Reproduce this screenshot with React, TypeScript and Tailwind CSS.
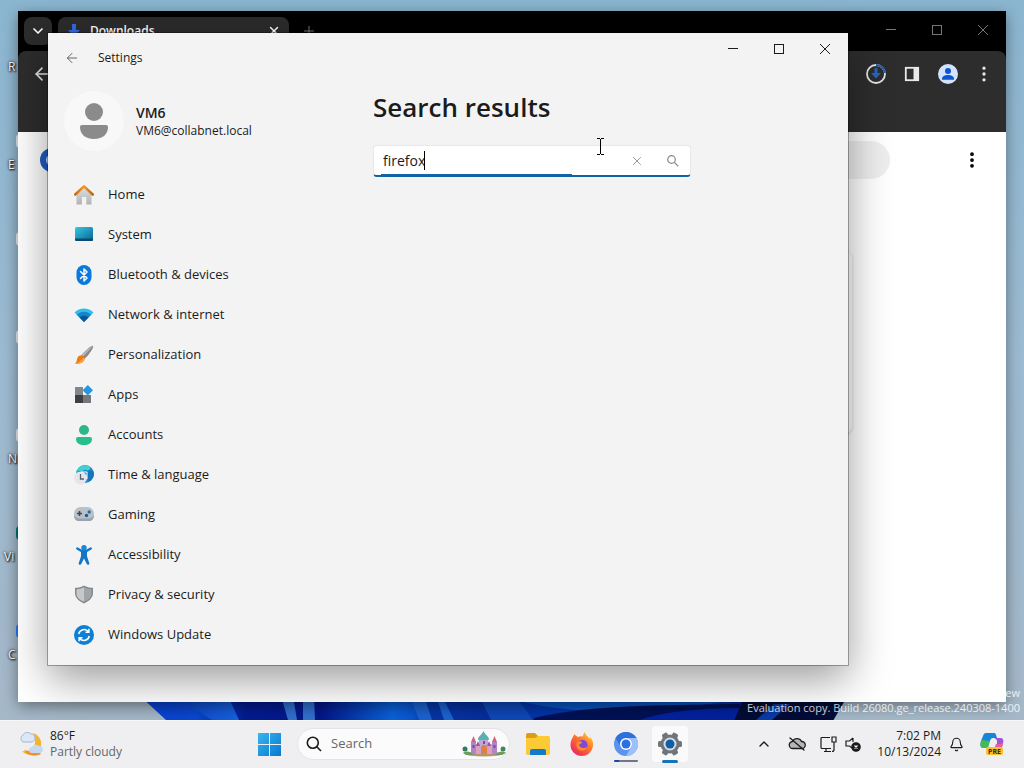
import type { ReactNode } from "react";
import { ArrowLeft, Bell, ChevronDown, ChevronUp, MoreVertical, Plus, Search, X } from "lucide-react";

const HomeIcon = () => (
  <svg viewBox="0 0 20 20" className="size-5">
    <defs>
      <linearGradient id="homeWall" x2="0" y2="1">
        <stop stopColor="#e0e0e0" />
        <stop offset="1" stopColor="#b0b2b5" />
      </linearGradient>
      <linearGradient id="homeRoof" x2="1">
        <stop stopColor="#c96a16" />
        <stop offset="0.5" stopColor="#f0982f" />
        <stop offset="1" stopColor="#c0670f" />
      </linearGradient>
    </defs>
    <path d="M2.500 9 10 2l7.500 7v10.500h-5.200V12H8v7.500H2.500z" fill="url(#homeWall)" />
    <path d="M1.300 9.500 10 1.400l8.700 8.100" fill="none" stroke="url(#homeRoof)" strokeWidth="2.600" strokeLinecap="round" strokeLinejoin="round" />
  </svg>
);

const SystemIcon = () => (
  <svg viewBox="0 0 20 20" className="size-5">
    <defs>
      <linearGradient id="sys" x2="1" y2="1">
        <stop stopColor="#35c8e4" />
        <stop offset="1" stopColor="#0b6290" />
      </linearGradient>
    </defs>
    <rect x="1" y="2" width="18" height="14" rx="1.5" fill="url(#sys)" />
    <path d="M1 13.500h18v1a1.500 1.500 0 0 1-1.500 1.500h-15A1.500 1.500 0 0 1 1 14.500z" fill="#0c4a73" />
  </svg>
);

const BluetoothIcon = () => (
  <svg viewBox="0 0 20 20" className="size-5">
    <rect x="2.500" y="0" width="15" height="20" rx="7.500" fill="#0a78dd" />
    <path d="M6.500 6.500 13 13l-3 3V4l3 3-6.500 6.500" fill="none" stroke="#fff" strokeWidth="1.500" strokeLinejoin="round" strokeLinecap="round" />
  </svg>
);

const NetworkIcon = () => (
  <svg viewBox="0 0 20 20" className="size-5">
    <path d="M10 17 .5 7.500C5.500 2.300 14.500 2.300 19.500 7.500z" fill="#32bdea" />
    <path d="M10 17 2.800 9.800c4-4.200 10.400-4.200 14.400 0z" fill="#1684c9" />
    <path d="m10 17-4.500-4.500c2.500-2.500 6.500-2.500 9 0z" fill="#0b5698" />
  </svg>
);

const BrushIcon = () => (
  <svg viewBox="0 0 20 20" className="size-5">
    <path d="M19 1c1.300 1.300-4.500 9.500-8.500 12.800l-3.300-3.300C10.500 6.500 17.700-.3 19 1z" fill="#85878c" />
    <path d="M19 1C17.500.3 10.500 7 7.200 10.500l1.600 1.600z" fill="#b5b7bb" />
    <path d="M7.500 10.200c2 .2 3 1.500 3.200 3.200-.4 4-4.200 5.600-9.900 5.200 2.400-1.500 1.800-3.700 2.800-6 .8-1.600 2.300-2.400 3.900-2.400z" fill="#ee7a17" />
    <path d="M1 18.600c2.700-.8 5.500-1.500 8.200-5.500l1.500.5c-.6 3.800-4.200 5.400-9.700 5z" fill="#f8a844" />
  </svg>
);

const AppsIcon = () => (
  <svg viewBox="0 0 20 20" className="size-5">
    <rect x="1" y="2" width="8" height="8" fill="#83868a" />
    <rect x="1" y="10" width="8" height="8" fill="#3c3f43" />
    <rect x="9" y="10" width="8" height="8" fill="#74777b" />
    <path d="m13.800 0 5.200 5.200-5.200 5.200-5.200-5.200z" fill="#2497e0" />
  </svg>
);

const AccountsIcon = () => (
  <svg viewBox="0 0 20 20" className="size-5">
    <circle cx="10" cy="5" r="5" fill="#2fb58a" />
    <path d="M4 12h12a2 2 0 0 1 2 2c0 4-3.500 6-8 6s-8-2-8-6a2 2 0 0 1 2-2z" fill="#27bd8c" />
  </svg>
);

const TimeIcon = () => (
  <svg viewBox="0 0 20 20" className="size-5">
    <circle cx="11" cy="9" r="9" fill="#1b88c8" />
    <path d="M3 5C6 0 12-1 16 2c1 3-2 4-4 3S9 7 6 6 3 8 2 9c0-2 .2-3 1-4z" fill="#45cfd1" />
    <path d="M15 6c2-1 4 0 4.800 2 .5 4-1.800 7-4.800 8.500-2-3-2-8 0-10.500z" fill="#1674bd" />
    <circle cx="6.500" cy="13" r="6.500" fill="#e5e5ea" />
    <path d="M6.500 9v5H10" stroke="#566070" strokeWidth="1.300" fill="none" />
    <path d="M7 7h6v7" stroke="#fff" strokeWidth="1" fill="none" />
  </svg>
);

const GamingIcon = () => (
  <svg viewBox="0 0 20 20" className="size-5">
    <rect x="0" y="2" width="20" height="14" rx="6.500" fill="#b9c1c9" />
    <path d="M0 10c0 4 2 6 5 6h10c3 0 5-2 5-6-1 2-3 3.500-5 3.500H5C3 13.500 1 12 0 10z" fill="#98a3ae" />
    <path d="M3 8.500h5M5.500 6v5" stroke="#3d454f" strokeWidth="1.500" />
    <circle cx="15.200" cy="7" r="1.700" fill="#2170b0" />
    <circle cx="12.500" cy="10.500" r="1.700" fill="#27588a" />
  </svg>
);

const AccessibilityIcon = () => (
  <svg viewBox="0 0 20 20" className="size-5">
    <circle cx="10" cy="2.700" r="2.700" fill="#1787d8" />
    <path d="m3.300 3.500 5 2.800h3.400l5-2.800" stroke="#1279c8" strokeWidth="2.500" fill="none" strokeLinecap="round" strokeLinejoin="round" />
    <path d="M7 6h6v5.300l2.300 6.900c.4 1.400-1.900 2.200-2.500.9L10 13.500l-2.800 5.600c-.6 1.300-2.900.5-2.500-.9L7 11.300z" fill="#1475c5" />
  </svg>
);

const ShieldIcon = () => (
  <svg viewBox="0 0 20 20" className="size-5">
    <path d="M10 .5c2.500 1.700 5.500 2.300 9 2.300V8c0 5-4 8-9 10.500C5 16 1 13 1 8V2.800c3.500 0 6.500-.6 9-2.300z" fill="#85888a" />
    <path d="M10 2.200c2.200 1.300 4.600 1.800 7.500 2V8.500c0 4-3 6.300-7.500 8.300z" fill="#a2a5a8" />
    <path d="M10 2.200C7.800 3.500 5.400 4 2.500 4.200v4.300c0 4 3 6.300 7.500 8.300z" fill="#c6c8c9" />
  </svg>
);

const UpdateIcon = () => (
  <svg viewBox="0 0 20 20" className="size-5">
    <circle cx="10" cy="10" r="10" fill="#0d80d5" />
    <path d="M4.700 9a5.500 5.500 0 0 1 9.800-2.200M15.300 11a5.500 5.500 0 0 1-9.800 2.200M14.900 3.800v3.400h-3.400M5.100 16.200v-3.400h3.400" fill="none" stroke="#fff" strokeWidth="1.500" />
  </svg>
);

const navItems = [
  { label: "Home", icon: <HomeIcon /> },
  { label: "System", icon: <SystemIcon /> },
  { label: "Bluetooth & devices", icon: <BluetoothIcon /> },
  { label: "Network & internet", icon: <NetworkIcon /> },
  { label: "Personalization", icon: <BrushIcon /> },
  { label: "Apps", icon: <AppsIcon /> },
  { label: "Accounts", icon: <AccountsIcon /> },
  { label: "Time & language", icon: <TimeIcon /> },
  { label: "Gaming", icon: <GamingIcon /> },
  { label: "Accessibility", icon: <AccessibilityIcon /> },
  { label: "Privacy & security", icon: <ShieldIcon /> },
  { label: "Windows Update", icon: <UpdateIcon /> },
];

const shortcuts = [
  { label: "R", color: "bg-transparent" },
  { label: "E", color: "bg-slate-100" },
  { label: "", color: "bg-slate-100" },
  { label: "", color: "bg-slate-100" },
  { label: "N", color: "bg-slate-100" },
  { label: "Vi", color: "bg-teal-700" },
  { label: "C", color: "bg-blue-500" },
];

function WindowControls() {
  return (
    <div className="flex">
      <button aria-label="Minimize" className="flex h-8 w-[46px] items-center justify-center">
        <svg viewBox="0 0 10 10" className="size-[10px]" stroke="currentColor"><path d="M0 4.500h10" /></svg>
      </button>
      <button aria-label="Maximize" className="flex h-8 w-[46px] items-center justify-center">
        <svg viewBox="0 0 10 10" className="size-[10px]" stroke="currentColor" fill="none"><rect x="0.5" y="0.5" width="9" height="9" /></svg>
      </button>
      <button aria-label="Close" className="flex h-8 w-[46px] items-center justify-center">
        <svg viewBox="0 0 10 10" className="size-[10px]" stroke="currentColor"><path d="m0 0 10 10M10 0 0 10" /></svg>
      </button>
    </div>
  );
}

function Wallpaper() {
  return (
    <svg viewBox="0 0 1024 24" preserveAspectRatio="none" className="absolute inset-x-0 bottom-0 h-6 w-full">
      <defs>
        <linearGradient id="bloom" x1="140" x2="840" gradientUnits="userSpaceOnUse">
          <stop stopColor="#0b3fd4" />
          <stop offset="0.08" stopColor="#0a49d0" />
          <stop offset="0.15" stopColor="#041c92" />
          <stop offset="0.26" stopColor="#04188a" />
          <stop offset="0.36" stopColor="#0b62da" />
          <stop offset="0.39" stopColor="#0a55cf" />
          <stop offset="0.41" stopColor="#0637a8" />
          <stop offset="0.5" stopColor="#082d9c" />
          <stop offset="1" stopColor="#0424a0" />
        </linearGradient>
        <linearGradient id="petal" x2="1">
          <stop stopColor="#0b44c4" />
          <stop offset="1" stopColor="#1863e0" />
        </linearGradient>
      </defs>
      <path d="M140 0h704l-14 24H166z" fill="url(#bloom)" />
      <path d="M178 2c14 8 24 16 34 22h27L228 0z" fill="url(#petal)" />
      <path d="M281 0h12l4 24h-9zM303 0h11l1 24h-12z" fill="#3270cf" />
      <path d="M410 0h14l8 24h-13zM436 0h6l12 24h-10z" fill="#1c63d0" />
      <path d="M479 0h38l16 24h-42z" fill="#0f48b8" />
      <path d="M515 0h210l20 24H534z" fill="#0435ac" />
      <path d="M515 4c60 16 140 14 220 0H515z" fill="#0b56c4" />
      <path d="M534 22c60-14 120-12 200-14h6v16H534z" fill="#021257" />
      <path d="M640 24c20-8 60-12 100-12v12z" fill="#0522a0" />
      <path d="M742 6h102l-14 24H732z" fill="#030d38" />
      <path d="m774 8 16 0-18 16h-16z" fill="#0b3ba8" />
    </svg>
  );
}

function BrowserWindow() {
  return (
    <section aria-label="Downloads" className="absolute bottom-[18px] left-[18px] right-[18px] top-[11px] flex flex-col bg-white shadow-[0_4px_14px_rgba(0,0,0,0.4)]">
      <div className="flex h-10 items-start bg-black text-white">
        <button aria-label="Search tabs" className="ml-[6px] mt-[6px] flex size-7 items-center justify-center rounded-lg bg-[#2c2c2c]">
          <ChevronDown className="size-4" strokeWidth={2.5} />
        </button>
        <div className="ml-[6px] mt-[6px] flex h-7 w-[231px] items-center rounded-lg bg-[#2c2c2c] pl-[10px] pr-2">
          <svg viewBox="0 0 12 14" className="h-[14px] w-3" fill="#3569e0"><path d="M4 0h4v6h4l-6 6-6-6h4z" /></svg>
          <span className="ml-[10px] flex-1 text-xs font-semibold">Downloads</span>
          <button aria-label="Close tab"><X className="size-[14px]" strokeWidth={2.5} /></button>
        </div>
        <button aria-label="New tab" className="ml-3 mt-3 text-[#777]"><Plus className="size-4" strokeWidth={1.5} /></button>
        <div className="ml-auto mt-[3px] text-[#777]"><WindowControls /></div>
      </div>
      <div className="bg-black">
        <div className="flex h-[81px] items-start justify-between rounded-t-lg bg-[#2d2d2d] px-[14px] pt-[13px] text-[#e8e8e8]">
          <button aria-label="Back"><ArrowLeft className="size-5" strokeWidth={2} /></button>
          <div className="flex gap-4">
            <button aria-label="Downloads in progress">
              <svg viewBox="0 0 20 20" className="size-5" fill="none">
                <circle cx="10" cy="10" r="9" stroke="#e3e3e3" strokeWidth="1.800" />
                <path d="M10 1a9 9 0 0 1 9 8" stroke="#235ba8" strokeWidth="1.800" />
                <path d="M8.500 4h3v5H15l-5 5.500L5 9h3.500z" fill="#2764bd" />
              </svg>
            </button>
            <button aria-label="Side panel">
              <svg viewBox="0 0 20 20" className="size-5">
                <rect x="3.800" y="3.800" width="12.400" height="12.400" fill="none" stroke="#e8e8e8" strokeWidth="1.800" />
                <path d="M11.500 3.500h5v13h-5z" fill="#e8e8e8" />
              </svg>
            </button>
            <button aria-label="Profile">
              <svg viewBox="0 0 20 20" className="size-5">
                <circle cx="10" cy="10" r="10" fill="#d3e3fd" />
                <circle cx="10" cy="7" r="3" fill="#0b57d0" />
                <path d="M4 15c0-3 3-4 6-4s6 1 6 4v.7H4z" fill="#0b57d0" />
              </svg>
            </button>
            <button aria-label="Browser menu" className="-mr-[2px] flex w-5 justify-center"><MoreVertical className="size-5" strokeWidth={2} /></button>
          </div>
        </div>
      </div>
      <div className="flex h-14 items-center justify-between pl-[22px] pr-6">
        <svg viewBox="0 0 24 24" className="size-6"><circle cx="12" cy="12" r="12" fill="#1f5cc4" /><circle cx="12" cy="12" r="5" fill="#3d86f2" stroke="#dbe8fb" strokeWidth="2" /></svg>
        <div className="ml-auto mr-[72px] h-[38px] w-[600px] rounded-full bg-[#eeeeee]" />
        <button aria-label="Page menu"><MoreVertical className="size-5 text-black" strokeWidth={2.500} /></button>
      </div>
      <div className="mx-auto mt-[62px] h-[184px] w-[680px] rounded-lg shadow-[0_1px_3px_rgba(0,0,0,0.2)]" />
    </section>
  );
}

function SettingsWindow() {
  return (
    <section aria-label="Settings" className="absolute bottom-[55px] left-12 right-[176px] top-[33px] flex flex-col bg-[#f3f3f3] text-[#1b1b1b] shadow-[0_0_0_1px_rgba(0,0,0,0.3),0_14px_40px_rgba(0,0,0,0.4)]">
      <header className="flex h-[50px] items-start justify-between">
        <div className="flex h-[50px] items-center pl-4">
          <button aria-label="Back" className="text-[#666]"><ArrowLeft className="size-4" strokeWidth={1.500} /></button>
          <span className="ml-[18px] text-xs">Settings</span>
        </div>
        <WindowControls />
      </header>
      <div className="flex min-h-0 flex-1">
        <aside className="w-[325px] shrink-0">
          <div className="flex items-center gap-3 pl-4 pt-2">
            <div className="flex size-[60px] items-center justify-center rounded-full bg-[#f8f8f8]">
              <svg viewBox="0 0 28 36" className="h-9 w-7" fill="#8b8b8b">
                <circle cx="14" cy="9" r="9" />
                <path d="M2 22h24a2 2 0 0 1 2 2c0 7-5 12-14 12S0 31 0 24a2 2 0 0 1 2-2z" />
              </svg>
            </div>
            <div className="pt-[2px]">
              <p className="text-sm font-semibold leading-[18px]">VM6</p>
              <p className="text-xs leading-[18px]">VM6@collabnet.local</p>
            </div>
          </div>
          <nav className="mt-6">
            {navItems.map((item) => (
              <a key={item.label} href="#" className="flex h-10 items-center gap-[14px] pl-[26px] text-[13px]">
                {item.icon}
                {item.label}
              </a>
            ))}
          </nav>
        </aside>
        <main className="flex-1 pt-1">
          <h1 className="text-[26px] font-semibold leading-10">Search results</h1>
          <div className="relative mt-[18px] flex h-8 w-[318px] items-center overflow-hidden rounded border border-[#e8e8e8] border-b-2 border-b-[#1064a6] bg-white">
            <input aria-label="Find a setting" defaultValue="firefox" className="min-w-0 flex-1 bg-transparent pl-[9px] text-sm outline-none" />
            <span className="absolute left-[50px] top-[5px] h-[19px] w-px bg-black" />
            <button aria-label="Clear" className="mr-[22px] text-[#888]"><X className="size-[14px]" strokeWidth={1.500} /></button>
            <button aria-label="Search" className="mr-[10px] text-[#888]">
              <svg viewBox="0 0 14 14" className="size-[14px]" fill="none" stroke="currentColor" strokeWidth="1.200">
                <circle cx="5.500" cy="5.500" r="3.800" />
                <path d="m8.300 8.300 4 4" />
              </svg>
            </button>
            <span className="absolute bottom-0 left-[7px] h-px w-[191px] bg-[#1064a6]" />
          </div>
        </main>
      </div>
    </section>
  );
}

function TaskButton({ label, children }: { label: string; children: ReactNode }) {
  return (
    <button aria-label={label} className="relative flex size-10 items-center justify-center">
      {children}
    </button>
  );
}

function Taskbar() {
  return (
    <footer className="flex h-12 shrink-0 items-center border-t border-[#f7f7f7] bg-[#efeff1] pb-px text-xs text-[#1b1b1b]">
      <button className="flex w-[249px] items-center gap-[6px] pl-[18px] text-left">
        <svg viewBox="0 0 26 26" className="size-[26px]">
          <path d="M15 2a11 11 0 1 1-11 18c8 2 13-3 13-9 0-4-1-7-2-9z" fill="#f4b52c" />
          <path d="M6 19c5 2 9 0 11-3l6 7c-6 3-14 2-17-4z" fill="#ef9327" />
          <path d="M5 11a4 4 0 0 1 0-7 5 5 0 0 1 8-1c3 0 4 2 4 4s-2 4-4 4z" fill="#dce8f7" stroke="#9eb8dc" />
          <path d="M14 22a3 3 0 0 1 0-6 4.500 4.500 0 0 1 7-1c3 0 4 2 4 4s-2 3-4 3z" fill="#c5daf2" />
        </svg>
        <span className="leading-4">
          <span className="block">86°F</span>
          <span className="block text-[#666]">Partly cloudy</span>
        </span>
      </button>

      <div className="flex items-center gap-1">
        <TaskButton label="Start">
          <svg viewBox="0 0 23 23" className="size-[23px]">
            <defs>
              <linearGradient id="start" x2="1" y2="1">
                <stop stopColor="#36b6ef" />
                <stop offset="1" stopColor="#0878cf" />
              </linearGradient>
            </defs>
            <path d="M0 0h11v11H0zM12 0h11v11H12zM0 12h11v11H0zM12 12h11v11H12z" fill="url(#start)" />
          </svg>
        </TaskButton>
        <label className="mx-1 flex h-8 w-[213px] items-center gap-[9px] rounded-full border border-[#e4e4e6] bg-[#fbfbfb] pl-2 pr-[2px]">
          <svg viewBox="0 0 16 16" className="size-4 shrink-0" fill="none" stroke="#1b1b1b" strokeWidth="1.600">
            <circle cx="6.800" cy="6.800" r="5.500" />
            <path d="m10.800 10.800 4.200 4.200" />
          </svg>
          <input aria-label="Search" placeholder="Search" className="min-w-0 flex-1 bg-transparent text-[13px] outline-none placeholder:text-[#666]" />
          <svg viewBox="0 0 46 26" className="h-[26px] w-[46px] shrink-0">
            <ellipse cx="23" cy="23" rx="18" ry="2.500" fill="#b6966c" />
            <path d="M10 11h5v12h-5zM31 11h5v12h-5z" fill="#b184c9" />
            <path d="M15 13h16v10H15z" fill="#dfa0bd" />
            <path d="M18 7h9v15h-9z" fill="#c0a8da" />
            <path d="m12.500 5 2.500 6h-5zM33.500 5l2.500 6h-5z" fill="#d95f78" />
            <path d="M17 9c0-4 3-4 5.500-9C25 5 28 5 28 9z" fill="#5bafb4" />
            <path d="m17 10 2 5h-4zM28 10l2 5h-4z" fill="#8d5aab" />
            <path d="M20 23v-6a3 3 0 0 1 6 0v6z" fill="#dd8042" />
            <path d="M11.500 14h2v3h-2zM32.500 14h2v3h-2zM22 10h2v3h-2z" fill="#72509b" />
            <circle cx="4" cy="18" r="2.500" fill="#33795d" />
            <circle cx="42" cy="18" r="2.500" fill="#3f8560" />
            <path d="M2 22c4-3 8-1 11 2H5zM45 22c-4-3-8-1-11 2h7z" fill="#6d9c60" />
          </svg>
        </label>
        <TaskButton label="File Explorer">
          <svg viewBox="0 0 26 24" className="h-6 w-[26px]">
            <path d="M1 3a2 2 0 0 1 2-2h7l3 3h11v18H1z" fill="#dc9c13" />
            <path d="M1 6h9l3-2h10a2 2 0 0 1 2 2v15a2 2 0 0 1-2 2H3a2 2 0 0 1-2-2z" fill="#fcca35" />
            <path d="M5 23v-4a2 2 0 0 1 2-2h12a2 2 0 0 1 2 2v4z" fill="#1479cb" />
          </svg>
        </TaskButton>
        <TaskButton label="Firefox">
          <svg viewBox="0 0 24 24" className="size-6">
            <defs>
              <linearGradient id="fox" x1="1" x2="0.200" y2="1">
                <stop stopColor="#ffe24b" />
                <stop offset="0.450" stopColor="#ff7b25" />
                <stop offset="1" stopColor="#ec1f65" />
              </linearGradient>
            </defs>
            <path d="M3 5c1-2 1-2 1-3 1 1 2 2 4 3 2-1 3-1 5-.5C13 2 14 1 15 0c0 3 3 4 5 7 0-1 0-2-.5-2.500C23 8 24 12 22.500 16 21 21 16.500 24 12 24 5.500 24 .5 19 .5 13 .5 10 1.500 7 3 5z" fill="url(#fox)" />
            <circle cx="12.500" cy="13" r="5" fill="#8145d7" />
            <path d="M7 10c2-1 3-1 5 0 0 2-3 2-3 3 1 3 4 4 8 2-1 4-6 5-9 2-2-2-2-5-1-7z" fill="#ff8b26" />
          </svg>
        </TaskButton>
        <TaskButton label="Chromium">
          <svg viewBox="0 0 24 24" className="size-6">
            <circle cx="12" cy="12" r="12" fill="#5b93ee" />
            <path d="M1.600 6A12 12 0 0 1 22.400 6H12a6 6 0 0 0-5.200 9z" fill="#2d6fdb" />
            <path d="M22.400 6A12 12 0 0 1 12 24l5.200-9A6 6 0 0 0 12 6z" fill="#9bc0fa" />
            <circle cx="12" cy="12" r="6" fill="#fff" />
            <circle cx="12" cy="12" r="4.500" fill="#2a70e0" />
          </svg>
          <span className="absolute bottom-[2px] h-[2px] w-6 rounded-full bg-gradient-to-r from-[#1a4aa0] from-20% to-[#6e7785] to-20%" />
        </TaskButton>
        <TaskButton label="Settings">
          <span className="flex size-9 items-center justify-center rounded bg-[#fafafa]">
            <svg viewBox="0 0 26 26" className="size-[26px]">
              <g fill="#70757b">
                <circle cx="13" cy="13" r="9.500" />
                <rect x="10" y="1" width="6" height="24" rx="1.500" transform="rotate(30 13 13)" />
                <rect x="10" y="1" width="6" height="24" rx="1.500" transform="rotate(90 13 13)" />
                <rect x="10" y="1" width="6" height="24" rx="1.500" transform="rotate(150 13 13)" />
              </g>
              <circle cx="13" cy="13" r="6.500" fill="#d8dde2" />
              <circle cx="13" cy="13" r="4.500" fill="#0f5fa8" />
            </svg>
          </span>
          <span className="absolute bottom-px h-[3px] w-4 rounded-full bg-[#1474b5]" />
        </TaskButton>
      </div>

      <div className="ml-auto flex items-center pr-5">
        <button aria-label="Hidden icons" className="mr-4"><ChevronUp className="size-4" strokeWidth={2} /></button>
        <button aria-label="OneDrive" className="mr-[14px]">
          <svg viewBox="0 0 18 14" className="h-[14px] w-[18px]" fill="#b5b5b5" stroke="#1b1b1b" strokeWidth="1.300" strokeLinecap="round">
            <path d="M5 11.500a3.500 3.500 0 0 1-.5-7 5 5 0 0 1 9 0 3.500 3.500 0 0 1 .5 7z" />
            <path d="m2 1 14 12" />
          </svg>
        </button>
        <button aria-label="Network" className="mr-2">
          <svg viewBox="0 0 17 17" className="size-[17px]" fill="none" stroke="#1b1b1b" strokeWidth="1.200">
            <path d="M10 1.500H2a1 1 0 0 0-1 1v9a1 1 0 0 0 1 1h9M4 15.500h7M6 12.500v3M12 1h4v5h-4zM14 6v7.500a2 2 0 0 1-2 2" />
          </svg>
        </button>
        <button aria-label="Volume muted" className="mr-4">
          <svg viewBox="0 0 16 16" className="size-4" fill="none" stroke="#1b1b1b" strokeWidth="1.200">
            <path d="M8 2 4.500 5H1v5h3.500L7 12M8 2v4" />
            <circle cx="11" cy="11" r="4.200" fill="#1b1b1b" />
            <path d="m9.500 9.500 3 3m0-3-3 3" stroke="#fff" />
          </svg>
        </button>
        <button className="mr-2 text-right leading-4">
          <span className="block">7:02 PM</span>
          <span className="block">10/13/2024</span>
        </button>
        <button aria-label="Notifications" className="mr-4"><Bell className="size-[15px]" strokeWidth={1.800} /></button>
        <button aria-label="Copilot">
          <svg viewBox="0 0 24 24" className="size-6">
            <path d="M6 1h8c2 0 2 2 3 5h-4c-2 0-3 2-4 5l-1 4H3c-3 0-3-3-2-6l2-5c.6-2 1.500-3 3-3z" fill="#1785d8" />
            <path d="M2 8c3 0 5 1 8 1l-2 7H3c-3 0-3-3-2-6z" fill="#45b95a" />
            <path d="M14 6h6c3 0 4 2 3 5l-2 6c-.6 2-2 4-4 4h-5c2 0 3-2 4-5l1-5c.5-2 0-4-3-5z" fill="#a255d6" />
            <path d="M16 12h7l-2 7H9l4-2c2-1 2-3 3-5z" fill="#e7609c" />
            <rect x="6" y="15" width="17" height="8" rx="2" fill="#fbc02f" />
            <text x="14.500" y="21.500" textAnchor="middle" fontSize="7" fontWeight="700" fill="#3a2a00" fontFamily="Open Sans, sans-serif">PRE</text>
          </svg>
        </button>
      </div>
    </footer>
  );
}

export default function App() {
  return (
    <div className="flex h-screen flex-col overflow-hidden font-['Open_Sans','Noto_Sans',sans-serif]">
      <div className="relative flex-1 overflow-hidden bg-gradient-to-b from-[#8bb6d0] via-[#9dbbd2] to-[#a5b8c8]">
        <Wallpaper />
        <div className="flex w-[18px] flex-col pt-9">
          {shortcuts.map((item, i) => (
            <div key={i} className="flex h-[98px] flex-col">
              <span className={`ml-4 h-[14px] w-8 rounded ${item.color}`} />
              <span className={`mt-[9px] text-xs text-white [text-shadow:1px_1px_2px_#000,0_0_3px_#000] ${item.label.length > 1 ? "pl-1" : "pl-2"}`}>{item.label}</span>
            </div>
          ))}
        </div>
        <BrowserWindow />
        <div className="absolute bottom-[5px] right-1 text-right text-[11px] leading-[15px] text-white/80">
          <p>ew</p>
          <p>Evaluation copy. Build 26080.ge_release.240308-1400</p>
        </div>
        <SettingsWindow />
        {/* text cursor */}
        <svg viewBox="0 0 9 17" className="absolute left-[596px] top-[138px] h-[17px] w-[9px]" stroke="#000" fill="none">
          <path d="M1 .5h3m1 0h3M4.500 1v15M1 16.500h3m1 0h3" />
        </svg>
      </div>
      <Taskbar />
    </div>
  );
}
